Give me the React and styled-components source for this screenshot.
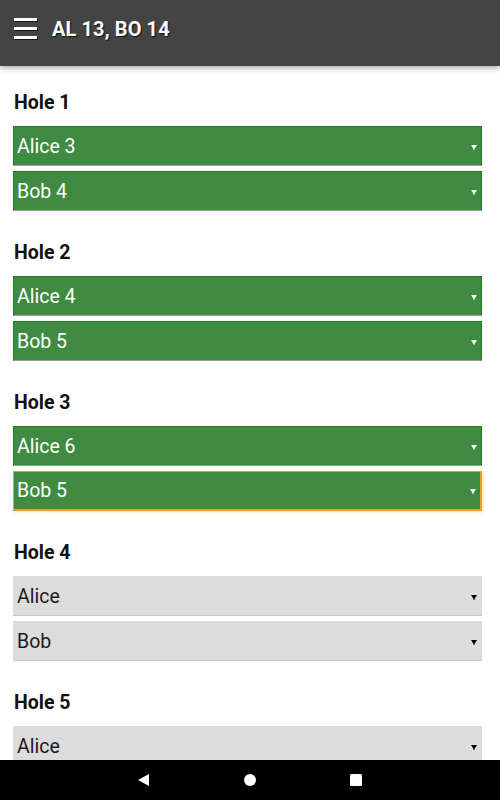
import React from "react";
import styled, { createGlobalStyle, css } from "styled-components";

const Global = createGlobalStyle`
  html, body { margin: 0; padding: 0; background: #fff; overflow: hidden; }
  body { font-family: Roboto, "Noto Sans", "Liberation Sans", sans-serif; }
`;

const Page = styled.div`
  width: 500px;
  height: 800px;
  position: relative;
  overflow: hidden;
  background: #fff;
`;

const Header = styled.header`
  height: 66px;
  box-sizing: border-box;
  padding: 0 0 8px 14px;
  background: #444444;
  display: flex;
  align-items: center;
  gap: 15px;
  box-shadow: 0 2px 6px rgba(0, 0, 0, 0.35);
  position: relative;
  z-index: 2;
`;

const Burger = styled.div`
  width: 23px;
  display: flex;
  flex-direction: column;
  gap: 6px;
  margin-top: -1px;
`;

const BurgerLine = styled.span`
  display: block;
  height: 3px;
  background: #fff;
  box-shadow: 1px 1px 0 rgba(0, 0, 0, 0.7);
`;

const Title = styled.h1`
  margin: 0;
  color: #fff;
  font-size: 20px;
  line-height: 24px;
  font-weight: 700;
  letter-spacing: 0.1px;
  text-shadow: 1px 1px 1px rgba(0, 0, 0, 0.8);
`;

const Content = styled.main`
  padding: 25px 18px 0 13px;
  display: flex;
  flex-direction: column;
  gap: 30px;
`;

const Section = styled.section`
  display: flex;
  flex-direction: column;
`;

const HoleTitle = styled.h2`
  margin: 0 0 11px 1px;
  font-size: 19.5px;
  line-height: 24px;
  font-weight: 700;
  color: #111;
`;

const Fields = styled.div`
  display: flex;
  flex-direction: column;
  gap: 5px;
`;

const Field = styled.div`
  height: 40px;
  box-sizing: border-box;
  display: flex;
  align-items: center;
  justify-content: space-between;
  padding: 0 4px 0 3px;
  font-size: 19.5px;
  ${(p) =>
    p.$filled
      ? css`
          background: #3e8b41;
          color: #fff;
          border: 1px solid #1f7d20;
          border-bottom-color: #8fa78f;
        `
      : css`
          background: #dcdcdc;
          color: #1a1a1a;
          border: 1px solid #dcdcdc;
          border-bottom-color: #c4c4c4;
        `}
  ${(p) =>
    p.$focused &&
    css`
      border: 1px solid #e9a12f;
      border-bottom-width: 2px;
      border-right-width: 2px;
      box-shadow: 1px 1px 3px rgba(233, 161, 47, 0.35);
    `}
`;

const Arrow = styled.svg`
  width: 6px;
  height: 6px;
  flex: none;
  margin-top: 1px;
`;

const NavBar = styled.nav`
  position: absolute;
  left: 0;
  right: 0;
  bottom: 0;
  height: 40px;
  background: #000;
  display: flex;
  align-items: center;
  justify-content: center;
  gap: 92px;
  z-index: 3;
`;

const NavIcon = styled.svg`
  width: 14px;
  height: 14px;
`;

const holes = [
  { n: 1, a: "Alice 3", b: "Bob 4", filled: true },
  { n: 2, a: "Alice 4", b: "Bob 5", filled: true },
  { n: 3, a: "Alice 6", b: "Bob 5", filled: true, focusB: true },
  { n: 4, a: "Alice", b: "Bob", filled: false },
  { n: 5, a: "Alice", b: "Bob", filled: false },
];

function Select({ label, filled, focused }) {
  return (
    <Field $filled={filled} $focused={focused}>
      <span>{label}</span>
      <Arrow viewBox="0 0 6 6">
        <path d="M0 1 H6 L3.5 5 V6 H2.5 V5 Z" fill={filled ? "#fff" : "#000"} />
      </Arrow>
    </Field>
  );
}

export default function App() {
  return (
    <Page>
      <Global />
      <Header>
        <Burger>
          <BurgerLine />
          <BurgerLine />
          <BurgerLine />
        </Burger>
        <Title>AL 13, BO 14</Title>
      </Header>
      <Content>
        {holes.map((h) => (
          <Section key={h.n}>
            <HoleTitle>Hole {h.n}</HoleTitle>
            <Fields>
              <Select label={h.a} filled={h.filled} />
              <Select label={h.b} filled={h.filled} focused={h.focusB} />
            </Fields>
          </Section>
        ))}
      </Content>
      <NavBar>
        <NavIcon viewBox="0 0 14 14">
          <path d="M12 1 V13 L1 7 Z" fill="#fff" />
        </NavIcon>
        <NavIcon viewBox="0 0 14 14">
          <circle cx="7" cy="7" r="6" fill="#fff" />
        </NavIcon>
        <NavIcon viewBox="0 0 14 14">
          <rect x="1" y="1" width="12" height="12" rx="1.5" fill="#fff" />
        </NavIcon>
      </NavBar>
    </Page>
  );
}
